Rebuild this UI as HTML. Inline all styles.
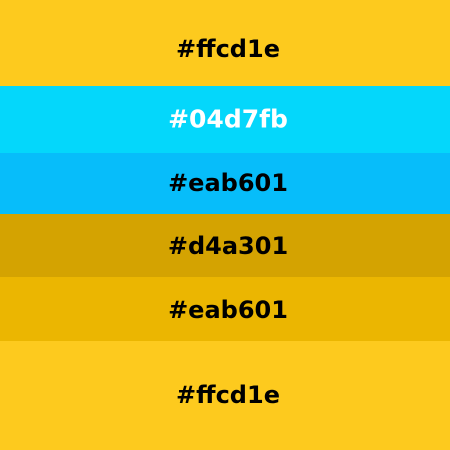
<!DOCTYPE html>
<html><head><style>
html,body{margin:0;padding:0;width:450px;height:450px;overflow:hidden}
div{position:absolute;left:0;width:450px;font-family:"DejaVu Sans",sans-serif;font-weight:bold;font-size:24px;color:#000;text-align:center}
span{position:absolute;left:6px;right:0;transform:translateY(-50%)}
</style></head><body>
<div style="top:0;height:86px;background:#fdca1e"><span style="top:49px">#ffcd1e</span></div>
<div style="top:86px;height:67px;background:#04d7fb;color:#fff;font-size:25px"><span style="top:33px">#04d7fb</span></div>
<div style="top:153px;height:61px;background:#07bdfa"><span style="top:30px">#eab601</span></div>
<div style="top:214px;height:63px;background:#d4a301"><span style="top:32px">#d4a301</span></div>
<div style="top:277px;height:64px;background:#ebb601"><span style="top:33px">#eab601</span></div>
<div style="top:341px;height:109px;background:#fdca1e"><span style="top:54px">#ffcd1e</span></div>
</body></html>
